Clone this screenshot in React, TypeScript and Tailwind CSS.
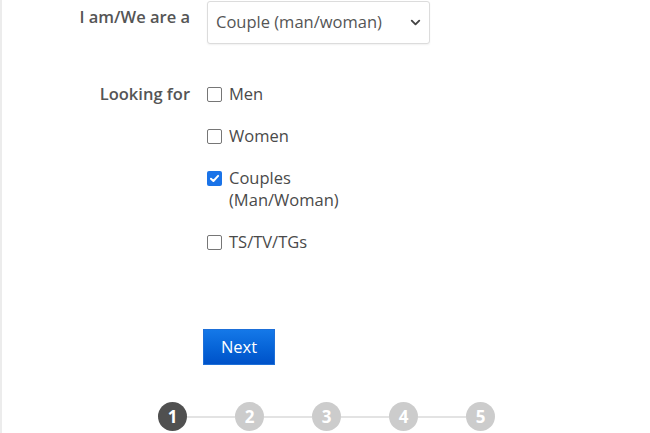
import { ChevronDown } from 'lucide-react';

const options = [
  { label: 'Men', checked: false },
  { label: 'Women', checked: false },
  { label: 'Couples (Man/Woman)', checked: true, lines: ['Couples', '(Man/Woman)'] },
  { label: 'TS/TV/TGs', checked: false },
];

const Checkbox = ({ checked }: { checked: boolean }) =>
  checked ? (
    <span className="mt-[4px] flex h-[15px] w-[15px] shrink-0 items-center justify-center rounded-[2px] bg-[#1a73e8]">
      <svg width="11" height="11" viewBox="0 0 10 10">
        <path d="M1.8 5.2 L4 7.3 L8.3 2.6" fill="none" stroke="white" strokeWidth="1.8" strokeLinecap="round" strokeLinejoin="round" />
      </svg>
    </span>
  ) : (
    <span className="mt-[4px] h-[15px] w-[15px] shrink-0 rounded-[2px] border border-[#767676] bg-white" />
  );

const Stepper = ({ current }: { current: number }) => (
  <div className="flex items-center pl-[156px]">
    {[1, 2, 3, 4, 5].map((n, i) => (
      <div key={n} className="flex items-center">
        {i > 0 && <div className="h-[2px] w-[48px] bg-[#e3e3e3]" />}
        <div
          className={
            n === current
              ? 'flex h-[29px] w-[29px] items-center justify-center rounded-full bg-[#505050] text-[17px] font-bold text-white'
              : 'flex h-[29px] w-[29px] items-center justify-center rounded-full bg-[#cccccc] text-[17px] font-bold text-white'
          }
        >
          {n}
        </div>
      </div>
    ))}
  </div>
);

export default function App() {
  return (
    <div className="h-[433px] w-[650px] overflow-hidden bg-white font-['Open_Sans',sans-serif]">
      <div className="h-full border-l-2 border-[#ececec]">
        <div className="grid grid-cols-[188px_1fr] gap-x-[17px] pt-[1px]">
          <div className="pt-[4px] text-right text-[16.5px] font-semibold text-[#555]">I am/We are a</div>
          <div className="flex h-[43px] w-[223px] items-center justify-between rounded-[3px] border border-[#dcdcdc] bg-white pl-[8px] pr-[6px] text-[16.5px] text-[#555] shadow-[0_1px_2px_rgba(0,0,0,0.06)]">
            <span>Couple (man/woman)</span>
            <ChevronDown size={15} strokeWidth={3} className="text-[#444]" />
          </div>

          <div className="pt-[38px] text-right text-[16.5px] font-semibold text-[#555]">Looking for</div>
          <div className="flex flex-col gap-[20px] pt-[39px]">
            {options.map((o) => (
              <label key={o.label} className="flex items-start gap-[7px] text-[16.5px] leading-[22px] text-[#4a4a4a]">
                <Checkbox checked={o.checked} />
                <span>
                  {(o.lines ?? [o.label]).map((l) => (
                    <span key={l} className="block">
                      {l}
                    </span>
                  ))}
                </span>
              </label>
            ))}
          </div>
        </div>

        <div className="pl-[201px] pt-[76px]">
          <button className="h-[36px] w-[72px] border border-[#1d6fd8] bg-gradient-to-b from-[#1478e8] to-[#0052c9] text-[16.5px] text-white">
            Next
          </button>
        </div>

        <div className="pt-[37px]">
          <Stepper current={1} />
        </div>
      </div>
    </div>
  );
}
